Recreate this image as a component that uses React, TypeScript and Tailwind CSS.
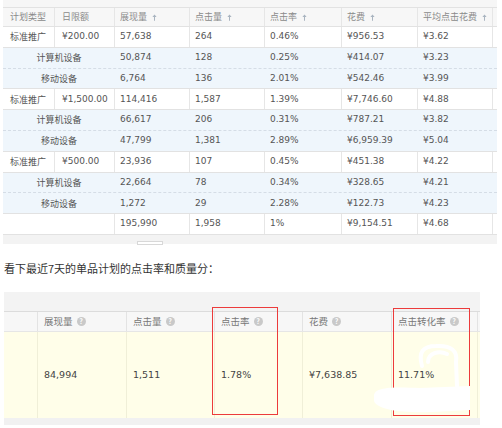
import React from 'react';

const FONT = { fontFamily: '"DejaVu Sans", "Noto Sans CJK SC", sans-serif' };
const CN = { fontFamily: '"Noto Sans CJK SC", "DejaVu Sans", sans-serif' };

const GRID = 'grid grid-cols-[52px_60px_75px_75px_77px_76px_75px_4px]';

type Group = { budget: string; main: string[]; pc: string[]; mobile: string[] };

const groups: Group[] = [
  {
    budget: '¥200.00',
    main: ['57,638', '264', '0.46%', '¥956.53', '¥3.62'],
    pc: ['50,874', '128', '0.25%', '¥414.07', '¥3.23'],
    mobile: ['6,764', '136', '2.01%', '¥542.46', '¥3.99'],
  },
  {
    budget: '¥1,500.00',
    main: ['114,416', '1,587', '1.39%', '¥7,746.60', '¥4.88'],
    pc: ['66,617', '206', '0.31%', '¥787.21', '¥3.82'],
    mobile: ['47,799', '1,381', '2.89%', '¥6,959.39', '¥5.04'],
  },
  {
    budget: '¥500.00',
    main: ['23,936', '107', '0.45%', '¥451.38', '¥4.22'],
    pc: ['22,664', '78', '0.34%', '¥328.65', '¥4.21'],
    mobile: ['1,272', '29', '2.28%', '¥122.73', '¥4.23'],
  },
];

const total = ['195,990', '1,958', '1%', '¥9,154.51', '¥4.68'];

function SortArrow() {
  return (
    <svg width="5" height="7" viewBox="0 0 5 7" className="ml-[5px] inline-block">
      <path d="M2.5 0.5 L4.6 3 L3 3 L3 6.8 L2 6.8 L2 3 L0.4 3 Z" fill="#a9b4c0" />
    </svg>
  );
}

function Help() {
  return (
    <span className="ml-[4px] inline-flex h-[9px] w-[9px] items-center justify-center rounded-full bg-[#c9c9c9] text-[7px] font-bold leading-none text-white">
      ?
    </span>
  );
}

function Cell({ children, last }: { children?: React.ReactNode; last?: boolean }) {
  return (
    <div className={`flex items-center pl-[5px] ${last ? '' : 'border-r border-[#e6e6e6]'}`}>{children}</div>
  );
}

function MainRow({ label, budget, vals }: { label: string; budget: string; vals: string[] }) {
  return (
    <div className={`${GRID} h-[20.8px] border-b border-[#e2e2e2] bg-white`}>
      <div className="flex items-center border-r border-[#e6e6e6] pl-[7px]" style={CN}>{label}</div>
      <div className="flex items-center border-r border-[#e6e6e6] pl-[7px]">{budget}</div>
      {vals.map((v, i) => (
        <Cell key={i}>{v}</Cell>
      ))}
      <div />
    </div>
  );
}

function SubRow({ label, vals, dashed }: { label: string; vals: string[]; dashed?: boolean }) {
  return (
    <div
      className={`${GRID} h-[20.8px] bg-[#eff6fc] border-b ${dashed ? 'border-dashed border-[#d5dde6]' : 'border-[#e2e2e2]'}`}
    >
      <div className="col-span-2 flex items-center justify-center" style={CN}>{label}</div>
      {vals.map((v, i) => (
        <div key={i} className="flex items-center pl-[5px]">{v}</div>
      ))}
      <div />
    </div>
  );
}

function TopTable() {
  const heads = ['展现量', '点击量', '点击率', '花费', '平均点击花费'];
  return (
    <div className="ml-[3px] w-[494px] text-[9px] text-[#555]" style={FONT}>
      <div className="h-[8px] bg-[#f6f6f6] border-b border-[#e2e2e2]" />
      <div className={`${GRID} h-[19px] bg-[#f7f7f7] border-b border-[#e2e2e2] text-[#8a8a8a]`} style={CN}>
        <div className="flex items-center border-r border-[#e6e6e6] pl-[7px]">计划类型</div>
        <div className="flex items-center border-r border-[#e6e6e6] pl-[7px]">日限额</div>
        {heads.map((h) => (
          <div key={h} className="flex items-center border-r border-[#e6e6e6] pl-[5px]">
            {h}
            <SortArrow />
          </div>
        ))}
        <div />
      </div>
      {groups.map((g, i) => (
        <React.Fragment key={i}>
          <MainRow label="标准推广" budget={g.budget} vals={g.main} />
          <SubRow label="计算机设备" vals={g.pc} dashed />
          <SubRow label="移动设备" vals={g.mobile} />
        </React.Fragment>
      ))}
      <div className={`${GRID} h-[20.8px] bg-white border-b border-[#e2e2e2]`}>
        <div className="col-span-2 border-r border-[#e6e6e6]" />
        {total.map((v, i) => (
          <Cell key={i}>{v}</Cell>
        ))}
        <div />
      </div>
      <div className="relative h-[9px] bg-[#f3f3f3]">
        <div className="absolute left-[134px] top-[6px] h-[4px] w-[26px] border border-[#d8d8d8] bg-white" />
      </div>
    </div>
  );
}

function BottomTable() {
  const cols = 'grid grid-cols-[34px_89px_88px_88px_89px_86px_2px]';
  const heads = ['展现量', '点击量', '点击率', '花费', '点击转化率'];
  const vals = ['84,994', '1,511', '1.78%', '¥7,638.85', '11.71%'];
  return (
    <div className="relative ml-[4px] mt-[16px] w-[476px] text-[9.5px]" style={FONT}>
      <div className="h-[20px] bg-[#f3f3f3] border-b border-[#dcdcdc]" />
      <div className={`${cols} h-[20px] bg-[#f7f7f7] border-b border-[#e6e6e6] text-[#777]`} style={CN}>
        <div className="border-r border-[#e3e3e3]" />
        {heads.map((h) => (
          <div key={h} className="flex items-center border-r border-[#e3e3e3] pl-[6px]">
            {h}
            <Help />
          </div>
        ))}
        <div />
      </div>
      <div className={`${cols} h-[86px] bg-[#fffee9] text-[#444]`}>
        <div className="border-r border-[#f0efd8]" />
        {vals.map((v) => (
          <div key={v} className="flex items-center border-r border-[#f0efd8] pl-[6px]">{v}</div>
        ))}
        <div />
      </div>
      <div className="h-[7px] bg-[#f1f1f1]" />
      <div className="pointer-events-none absolute left-[208px] top-[15px] h-[108px] w-[66px] border border-[#ec3b3b]" />
      <div className="pointer-events-none absolute left-[389px] top-[16px] h-[108px] w-[77px] border border-[#ec3b3b]" />
    </div>
  );
}

export default function App() {
  return (
    <div className="relative h-[428px] w-[502px] overflow-hidden bg-white">
      <TopTable />
      <div className="ml-[4px] mt-[16px] h-[16px] text-[11px] leading-[16px] text-[#333]" style={CN}>
        看下最近7天的单品计划的点击率和质量分：
      </div>
      <BottomTable />
      {/* hand-drawn white scribble over the last value */}
      <svg className="pointer-events-none absolute left-0 top-0" width="502" height="428" viewBox="0 0 502 428">
        <path
          d="M422 366 C418 352 423 346 436 346 C451 345 458 351 456 362 L457 386 M428 362 C428 353 439 350 447 354"
          fill="none"
          stroke="#fff"
          strokeWidth="4"
          strokeLinecap="round"
        />
        <path d="M374 396 C374 387 392 387 420 388 L470 386 L470 410 L432 412 C402 413 377 410 374 401 Z" fill="#fff" />
      </svg>
    </div>
  );
}
